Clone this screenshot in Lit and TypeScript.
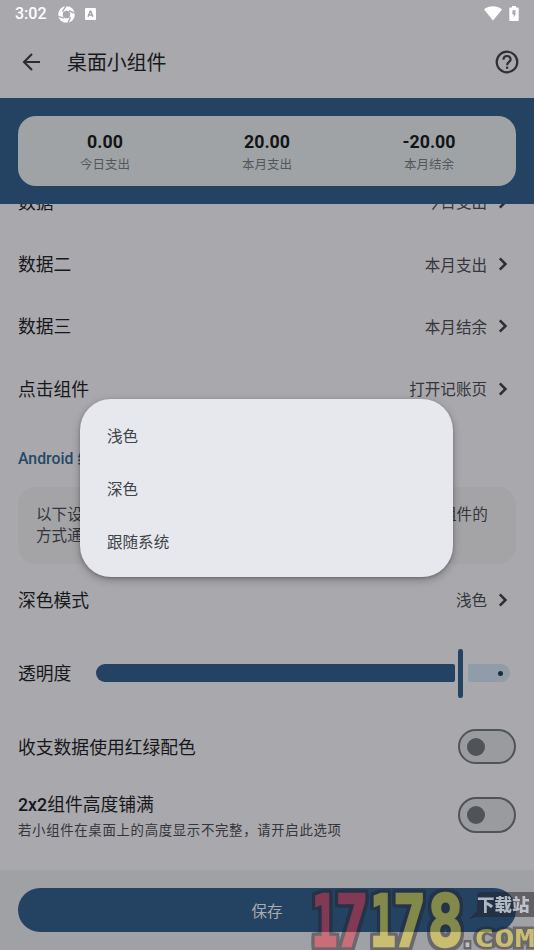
import { LitElement, html, css, svg } from "lit";
import { customElement, property } from "lit/decorators.js";

const chevron = html`<svg class="chev" width="10" height="14" viewBox="0 0 10 14">
  <path d="M1.800 1.300 7.500 7 1.800 12.700" fill="none" stroke="currentColor" stroke-width="2.500" />
</svg>`;

@customElement("setting-row")
class SettingRow extends LitElement {
  @property() label = "";
  @property() value = "";
  static styles = css`
    :host { display: flex; align-items: center; justify-content: space-between; height: 62.3px; flex: none; padding: 0 26px 0 18px; }
    .label { font-size: 17.8px; color: #17181b; padding-bottom: 2px; }
    .right { display: flex; align-items: center; gap: 11px; font-size: 15.56px; color: #34363b; }
    .value { padding-bottom: 1px; }
    .chev { display: block; color: #2e2f33; }
  `;
  render() {
    return html`<span class="label">${this.label}</span>
      <span class="right"><span class="value">${this.value}</span>${chevron}</span>`;
  }
}

@customElement("toggle-switch")
class ToggleSwitch extends LitElement {
  static styles = css`
    :host { display: flex; align-items: center; box-sizing: border-box; width: 58px; height: 35.5px; flex: none;
      border: 2.2px solid #505357; border-radius: 18px; background: #9a9b9f; padding-left: 6.8px; }
    .thumb { width: 18px; height: 18px; border-radius: 50%; background: #505357; }
  `;
  render() {
    return html`<div class="thumb"></div>`;
  }
}

const RED = "#ff2c42";
const YELLOW = "#ffe62a";
const digits = [
  { ch: "1", x: 7.500, w: 26, fill: RED },
  { ch: "7", x: 31.500, w: 33, fill: RED },
  { ch: "1", x: 66, w: 26, fill: YELLOW },
  { ch: "7", x: 89, w: 33, fill: YELLOW },
  { ch: "8", x: 123.500, w: 36, fill: YELLOW },
];

@customElement("site-mark")
class SiteMark extends LitElement {
  static styles = css`
    :host { display: block; }
    svg { display: block; }
    .outline { filter: drop-shadow(3px 0 0 #241f26) drop-shadow(-3px 0 0 #241f26) drop-shadow(0 3px 0 #241f26) drop-shadow(0 -3px 0 #241f26); }
    .digit { font: 700 71px "DejaVu Sans Mono", monospace; stroke-width: 2.5px; stroke-linejoin: miter; }
    .com { font: 700 25px "DejaVu Sans Mono", monospace; fill: #ffe62a; stroke: #241f26; stroke-width: 5px; paint-order: stroke; }
    .dot { fill: #f2f2f2; }
    .badge { font: 900 17.5px "Noto Sans CJK SC", sans-serif; fill: #d3dbe3; }
  `;
  render() {
    return html`<svg width="230" height="66" viewBox="0 0 230 66">
      <g opacity="0.43">
        <g class="outline">
          ${digits.map(
            (d) => svg`<text class="digit" x=${d.x} y="62" textLength=${d.w} lengthAdjust="spacingAndGlyphs" fill=${d.fill} stroke=${d.fill}>${d.ch}</text>`
          )}
        </g>
        <text class="com" x="170" y="62.500" textLength="61" lengthAdjust="spacingAndGlyphs">COM</text>
        <text class="com dot" x="157" y="62.500" textLength="13" lengthAdjust="spacingAndGlyphs">.</text>
      </g>
      <path d="M176 8h53a5 5 0 0 1 5 5v15a5 5 0 0 1-5 5h-57l-7 2 8-8V13a5 5 0 0 1 3-5z" fill="#241f26" opacity=".5" />
      <text class="badge" x="173" y="27" opacity=".8">下载站</text>
    </svg>`;
  }
}

@customElement("app-root")
class AppRoot extends LitElement {
  static styles = css`
    :host { display: flex; flex-direction: column; position: relative; width: 534px; height: 950px; overflow: hidden;
      background: #a9a8ac; color: #17181b; font-family: Roboto, "Noto Sans CJK SC", sans-serif; }
    svg { display: block; }
    .status { display: flex; align-items: center; height: 28px; padding: 0 15px; color: #fff; font-size: 16px; font-weight: 500; flex: none; }
    .clock { width: 43px; line-height: 28px; }
    .grow { flex: 1; }
    .lead { display: flex; align-items: center; gap: 9.5px; }
    .tail { display: flex; align-items: center; gap: 7px; margin-top: -2px; }
    .bar { display: flex; align-items: center; height: 70px; padding: 0 15px 2px 22px; flex: none; box-sizing: border-box; }
    .title { font-size: 19.9px; margin-left: 26.5px; padding-bottom: 1px; }
    .hero { background: #244363; height: 106px; flex: none; box-sizing: border-box; padding: 18px; }
    .card { height: 70px; box-sizing: border-box; background: #9fa3a6; border-radius: 18px; padding: 0 6px; display: grid; grid-template-columns: repeat(3, 1fr); align-items: center; }
    .stat { display: flex; flex-direction: column; align-items: center; }
    .num { font-size: 17.8px; font-weight: 700; line-height: 24px; color: #121416; }
    .cap { font-size: 12.5px; line-height: 17px; padding-top: 2px; color: #54575a; }
    .list { flex: 1; min-height: 0; overflow: hidden; display: flex; flex-direction: column; }
    .first { margin-top: -33.3px; }
    .section { margin: 28px 18px 0; height: 22px; line-height: 22px; flex: none; font-size: 15.8px; font-weight: 500; color: #254869; }
    .info { margin: 17px 18px 4.9px; height: 77px; flex: none; box-sizing: border-box; border-radius: 18px; background: #a4a4a7; padding: 18px 18px; font-size: 15.58px; line-height: 21.6px; color: #34363b; white-space: nowrap; }
    .slide { display: flex; align-items: center; height: 84px; flex: none; padding: 0 24px 0 18px; font-size: 17.8px; }
    .name { padding-bottom: 2px; }
    .done { margin-left: 24.5px; width: 359px; height: 18px; background: #244363; border-radius: 9px 2px 2px 9px; }
    .handle { margin: 0 5px 0 3.5px; width: 4.6px; height: 49px; border-radius: 2.3px; background: #244363; }
    .rest { flex: 1; height: 18px; border-radius: 2px 9px 9px 2px; background: #909ca8; display: flex; align-items: center; justify-content: flex-end; padding-right: 7px; box-sizing: border-box; }
    .dot { width: 5px; height: 5px; border-radius: 50%; background: #1d2c3c; }
    .switch { display: flex; align-items: center; justify-content: space-between; height: 63px; flex: none; padding: 0 18px; font-size: 17.8px; }
    .tall { height: 74px; }
    .two { display: flex; flex-direction: column; padding-top: 5px; }
    .main { line-height: 26px; font-weight: 400; }
    .latin { font-weight: 500; }
    .sub { font-size: 13.4px; letter-spacing: 0.68px; line-height: 26px; color: #34363b; }
    .foot { height: 80px; flex: none; box-sizing: border-box; padding: 18px 18px; background: #a0a1a4; }
    .save { height: 44px; border-radius: 22px; background: #244363; color: #a9abaf; font-size: 15.56px; display: flex; align-items: center; justify-content: center; box-sizing: border-box; padding-bottom: 1px; }
    .menu { position: absolute; left: 80px; top: 399px; width: 373px; height: 178px; box-sizing: border-box; padding: 9.5px 27px; border-radius: 31px; background: #e6e8ed; color: #404347;
      box-shadow: 0 3px 8px rgba(0,0,0,.27), 0 1px 3px rgba(0,0,0,.2); display: flex; flex-direction: column; }
    .item { height: 53.3px; display: flex; align-items: center; font-size: 15.56px; }
    .mark { position: absolute; left: 304px; top: 884px; }
  `;

  render() {
    return html`
      <div class="status">
        <span class="clock">3:02</span>
        <span class="lead">
          <svg width="17" height="17" viewBox="0 0 18 18">
            <circle cx="9" cy="9" r="6.300" fill="none" stroke="#fff" stroke-width="5" />
            <path d="M8.500 0 4.800 6M17.800 7.500 11.500 5M10.500 18l2.700-6M.2 11 6.500 12.800" stroke="#a9a8ac" stroke-width="1.500" />
            <path d="M5.500 6.500 9.500 4.800 13 8 12 12.500 8 13.200 5 10.200z" fill="#a9a8ac" />
          </svg>
          <svg width="11" height="12" viewBox="0 0 11 12">
            <rect width="11" height="12" rx="1" fill="#fff" />
            <path d="M3 8.800 5.200 3.200h.6L8 8.800M3.800 7h3.400" fill="none" stroke="#a09fa3" stroke-width="1.300" />
          </svg>
        </span>
        <span class="grow"></span>
        <span class="tail">
          <svg width="18" height="15" viewBox="0 0 18 15"><path d="M0 3.500C5-.9 13-.9 18 3.500L9 14.600z" fill="#fff" /></svg>
          <svg width="10" height="15" viewBox="0 0 10 15">
            <path d="M3 0h4v1.500h2q.7 0 .7.800v11.900q0 .8-.7.800H1q-.7 0-.7-.8V2.300q0-.8.7-.8h2z" fill="#fff" />
            <path d="M3.600 4.200h3.200l-.8 3h1.200L4.500 11.800l.4-3.400H3.300z" fill="#a9a8ac" />
          </svg>
        </span>
      </div>
      <div class="bar">
        <svg width="18.500" height="18" viewBox="0 0 18.500 18"><path d="M10 1 2 9l8 8M2 9h16" fill="none" stroke="#2c2d31" stroke-width="2.100" /></svg>
        <span class="title">桌面小组件</span>
        <span class="grow"></span>
        <svg width="24" height="24" viewBox="0 0 24 24" fill="none" stroke="#2e2f33" stroke-width="2.200">
          <circle cx="12" cy="12" r="10.300" />
          <path d="M8.500 9.700C8.500 4.800 15.600 4.800 15.600 9.400C15.600 12 12.100 12 12.100 15.200" />
          <path d="M11 16.600h2.200v2.200H11z" fill="#2e2f33" stroke="none" />
        </svg>
      </div>
      <div class="hero">
        <div class="card">
          ${[["0.00", "今日支出"], ["20.00", "本月支出"], ["-20.00", "本月结余"]].map(
            ([n, c]) => html`<div class="stat"><span class="num">${n}</span><span class="cap">${c}</span></div>`
          )}
        </div>
      </div>
      <div class="list">
        <setting-row class="first" label="数据一" value="今日支出"></setting-row>
        <setting-row label="数据二" value="本月支出"></setting-row>
        <setting-row label="数据三" value="本月结余"></setting-row>
        <setting-row label="点击组件" value="打开记账页"></setting-row>
        <div class="section">Android 组件</div>
        <div class="info">以下设置仅适用于系统桌面小组件，部分机型可能不支持该组件的<br />方式通知</div>
        <setting-row label="深色模式" value="浅色"></setting-row>
        <div class="slide">
          <span class="name">透明度</span>
          <div class="done"></div>
          <div class="handle"></div>
          <div class="rest"><div class="dot"></div></div>
        </div>
        <div class="switch"><span class="name">收支数据使用红绿配色</span><toggle-switch></toggle-switch></div>
        <div class="switch tall">
          <div class="two">
            <span class="main"><span class="latin">2x2</span>组件高度铺满</span>
            <span class="sub">若小组件在桌面上的高度显示不完整，请开启此选项</span>
          </div>
          <toggle-switch></toggle-switch>
        </div>
      </div>
      <div class="foot"><div class="save">保存</div></div>
      <div class="menu">
        ${["浅色", "深色", "跟随系统"].map((t) => html`<div class="item">${t}</div>`)}
      </div>
      <site-mark class="mark"></site-mark>
    `;
  }
}
